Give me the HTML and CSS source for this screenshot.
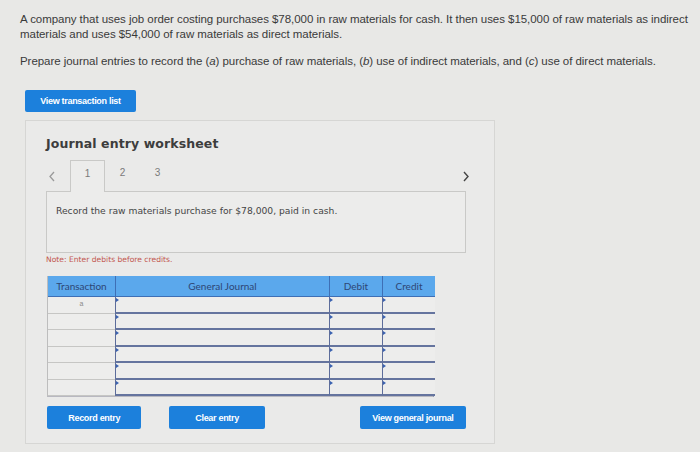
FILE: index.html
```html
<!DOCTYPE html>
<html>
<head>
<meta charset="utf-8">
<link rel="stylesheet" href="styles.css">
</head>
<body>
<div class="page">
  <p class="question">A company that uses job order costing purchases $78,000 in raw materials for cash. It then uses $15,000 of raw materials as indirect<br>materials and uses $54,000 of raw materials as direct materials.</p>
  <p class="question prepare">Prepare journal entries to record the (<i>a</i>) purchase of raw materials, (<i>b</i>) use of indirect materials, and (<i>c</i>) use of direct materials.</p>
  <button class="btn btn-list">View transaction list</button>

  <section class="panel">
    <h2 class="panel-title">Journal entry worksheet</h2>
    <div class="tabs">
      <span class="nav prev"><svg width="8" height="11" viewBox="0 0 8 11"><polyline points="6,1 2,5.5 6,10" fill="none" stroke="#9a9a9a" stroke-width="1.3"/></svg></span>
      <span class="tab active">1</span>
      <span class="tab">2</span>
      <span class="tab">3</span>
      <span class="nav next"><svg width="8" height="11" viewBox="0 0 8 11"><polyline points="2,1 6,5.5 2,10" fill="none" stroke="#444" stroke-width="1.4"/></svg></span>
    </div>
    <div class="desc">Record the raw materials purchase for $78,000, paid in cash.</div>
    <p class="note">Note: Enter debits before credits.</p>

    <div class="journal">
      <div class="hd">Transaction</div>
      <div class="hd">General Journal</div>
      <div class="hd">Debit</div>
      <div class="hd">Credit</div>

      <div class="c tr">a</div><div class="c in"></div><div class="c in"></div><div class="c in"></div>
      <div class="c tr"></div><div class="c in"></div><div class="c in"></div><div class="c in"></div>
      <div class="c tr"></div><div class="c in"></div><div class="c in"></div><div class="c in"></div>
      <div class="c tr"></div><div class="c in"></div><div class="c in"></div><div class="c in"></div>
      <div class="c tr"></div><div class="c in"></div><div class="c in"></div><div class="c in"></div>
      <div class="c tr"></div><div class="c in"></div><div class="c in"></div><div class="c in"></div>
    </div>

    <div class="actions">
      <button class="btn btn-record">Record entry</button>
      <button class="btn btn-clear">Clear entry</button>
      <button class="btn btn-view">View general journal</button>
    </div>
  </section>
</div>
</body>
</html>
```

FILE: styles.css
```css
* { box-sizing: border-box; }
html, body { margin: 0; padding: 0; }
body {
  background: #e8e8e6;
  width: 700px;
  height: 452px;
  overflow: hidden;
  font-family: "Liberation Sans", Arial, sans-serif;
}
.page {
  padding: 12px 0 0 20px;
}
.question {
  margin: 0;
  font-size: 11.5px;
  line-height: 15px;
  color: #3a3a3a;
  letter-spacing: -0.05px;
}
.prepare {
  margin-top: 12px;
}
.btn {
  display: block;
  border: none;
  background: #1c80dc;
  color: #fff;
  font-family: "Liberation Sans", Arial, sans-serif;
  font-weight: bold;
  font-size: 9px;
  letter-spacing: -0.3px;
  border-radius: 2px;
  height: 23px;
  padding: 0;
  text-align: center;
}
.btn-list {
  margin: 21px 0 0 5px;
  width: 111px;
  height: 22px;
}
.panel {
  margin: 8px 0 0 5px;
  width: 470px;
  background: #eaeae9;
  border: 1px solid #d6d6d4;
  padding: 15px 28px 14px 20px;
}
.panel-title {
  margin: 0;
  font-family: "DejaVu Sans", Verdana, sans-serif;
  font-weight: bold;
  font-size: 12.5px;
  line-height: 16px;
  color: #3d3d3d;
  letter-spacing: 0.1px;
}
.tabs {
  display: flex;
  align-items: flex-end;
  margin-top: 8px;
  height: 32px;
  position: relative;
  z-index: 1;
}
.nav {
  display: flex;
  align-items: center;
}
.prev {
  width: 24px;
  padding-left: 2px;
  height: 20px;
  align-self: flex-start;
  margin-top: 6px;
}
.tab {
  width: 35px;
  height: 32px;
  display: flex;
  justify-content: center;
  padding-top: 7px;
  font-family: "Liberation Sans", Arial, sans-serif;
  font-size: 10px;
  color: #7a7a7a;
}
.tab.active {
  background: #ececeb;
  border: 1px solid #c9c9c7;
  border-bottom: none;
}
.next {
  margin-left: auto;
  align-self: flex-start;
  margin-top: 11px;
  margin-right: -4px;
}
.desc {
  margin-top: -1px;
  height: 62px;
  background: #ececeb;
  border: 1px solid #c9c9c7;
  padding: 13px 0 0 9px;
  font-family: "DejaVu Sans", Verdana, sans-serif;
  font-size: 9.2px;
  color: #454545;
}
.note {
  margin: 2px 0 0 0;
  font-family: "DejaVu Sans", Verdana, sans-serif;
  font-size: 7.6px;
  line-height: 10px;
  color: #c2574f;
}
.journal {
  margin: 11px 0 0 1px;
  width: 387px;
  display: grid;
  grid-template-columns: 67px 214px 53px 53px;
  grid-template-rows: 21px repeat(6, 16.5px);
  border-left: 1px solid #bdbdbd;
  border-right: 1px solid #6a7aa8;
  border-bottom: 1px solid #b8b8c0;
}
.hd {
  background: #5ba8ec;
  color: #2e4674;
  font-family: Lato, "Open Sans", sans-serif;
  font-size: 10px;
  display: flex;
  align-items: center;
  justify-content: center;
  border-left: 1px solid #3e6fb5;
  border-bottom: 1px solid #3e6fb5;
}
.hd:first-child { border-left: none; }
.c {
  background: #ededec;
}
.tr {
  border-bottom: 1px solid #c6c6c4;
  color: #8a8a8a;
  font-size: 7px;
  display: flex;
  justify-content: center;
  padding-top: 3px;
}
.in {
  position: relative;
  border-left: 1px solid #5d6d9b;
  border-bottom: 2px solid #65749e;
}
.in::before {
  content: "";
  position: absolute;
  left: 0;
  top: 1px;
  border-top: 2px solid transparent;
  border-bottom: 2px solid transparent;
  border-left: 3px solid #3a62b0;
}
.actions {
  display: flex;
  margin-top: 9px;
  padding-left: 1px;
}
.btn-record { width: 96px; }
.btn-clear { width: 97px; margin-left: 28px; }
.btn-view { width: 108px; margin-left: 95px; }
```
